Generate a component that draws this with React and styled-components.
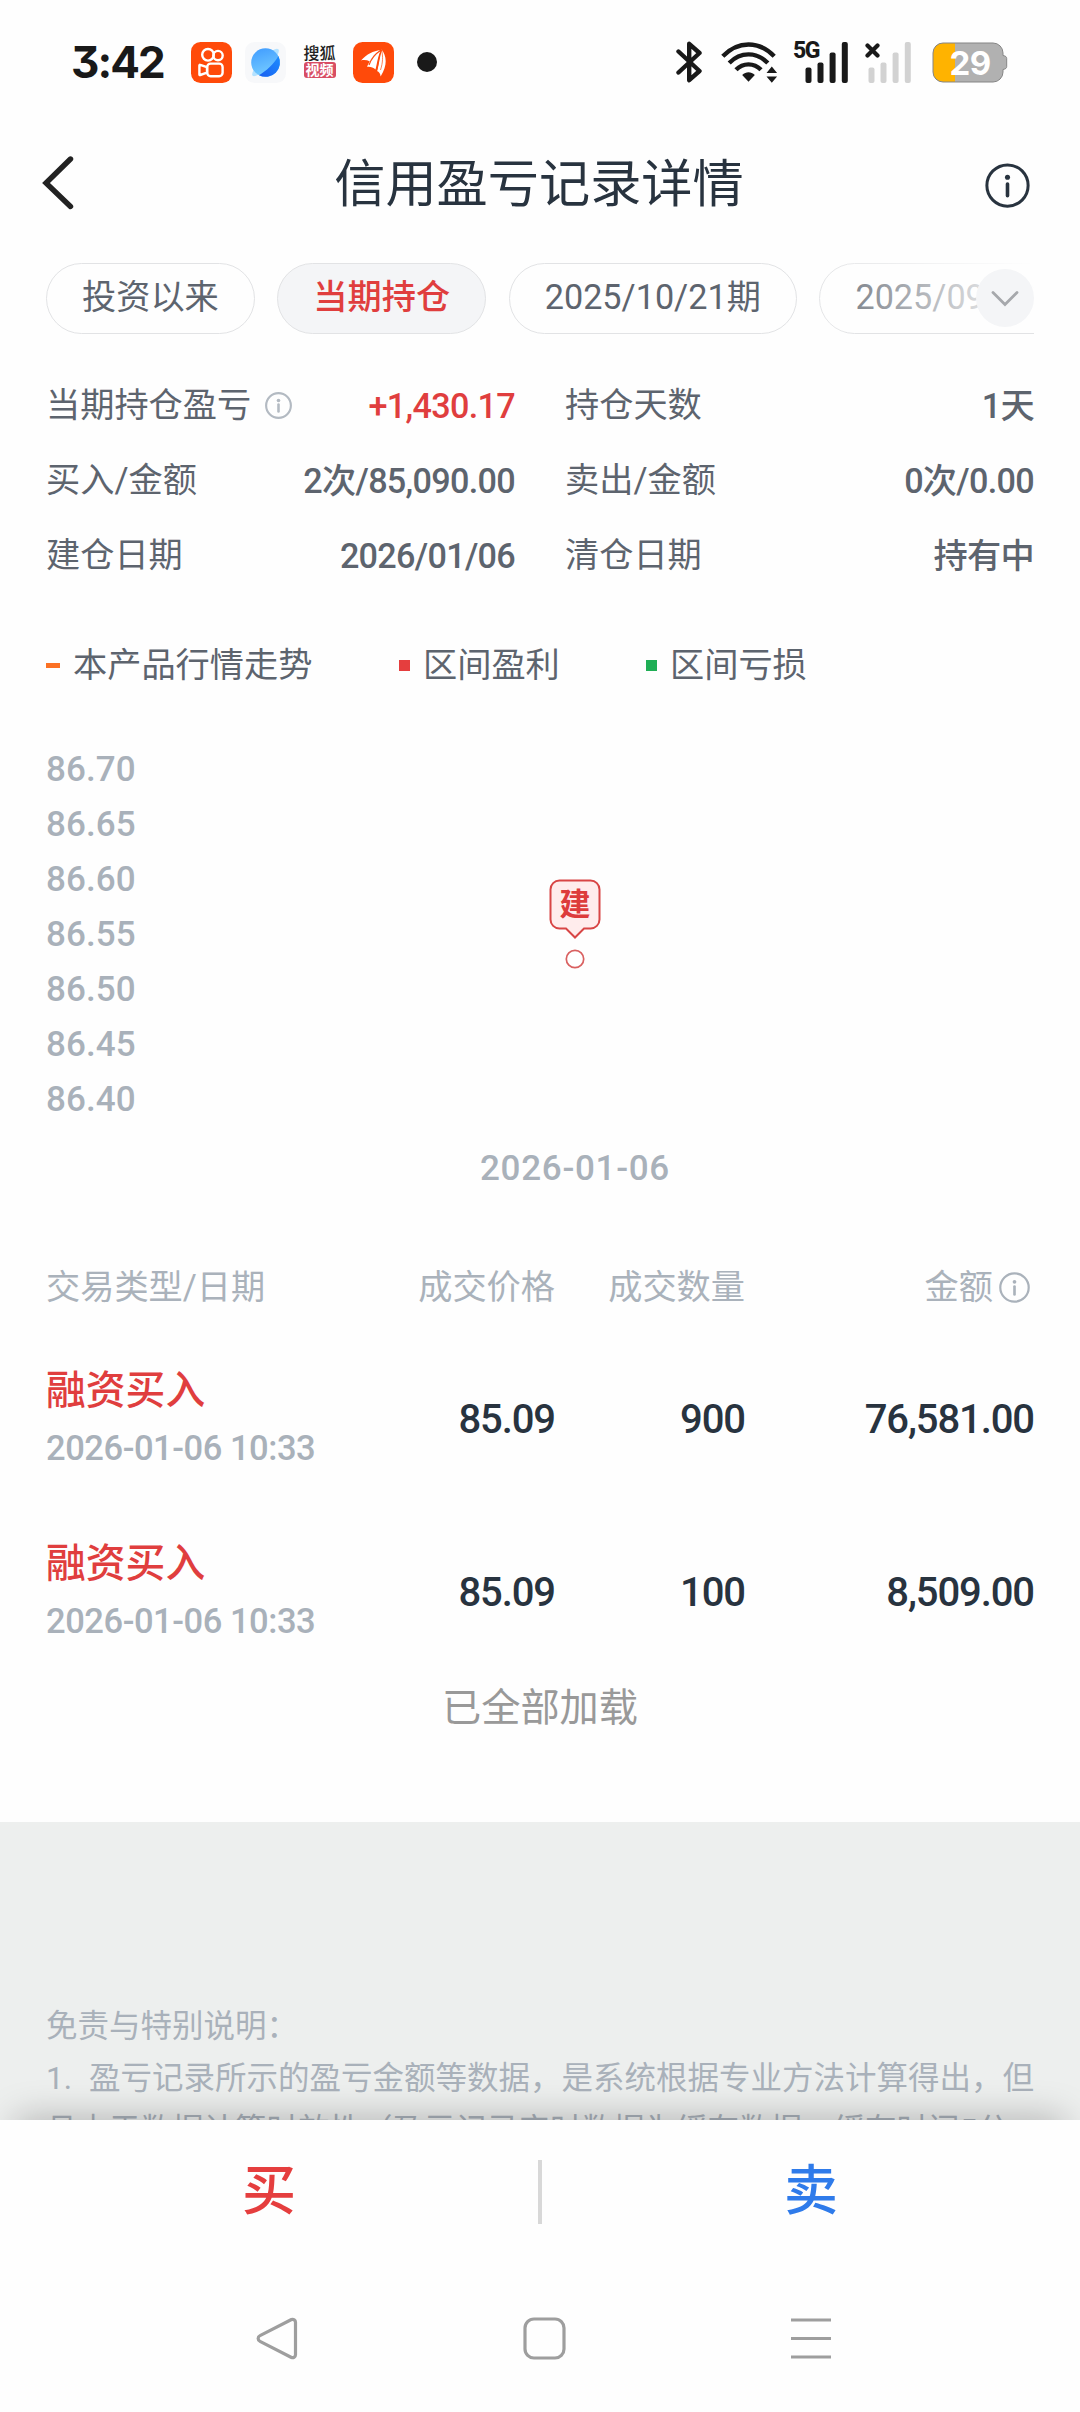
import React from 'react'
import styled, { createGlobalStyle } from 'styled-components'

const periods = [
    { label: '投资以来' },
    { label: '当期持仓', active: true },
    { label: '2025/10/21期' },
    { label: '2025/09/30期' },
]

const stats = [
    { label: '当期持仓盈亏', value: '+1,430.17', info: true, profit: true },
    { label: '持仓天数', value: '1天' },
    { label: '买入/金额', value: '2次/85,090.00' },
    { label: '卖出/金额', value: '0次/0.00' },
    { label: '建仓日期', value: '2026/01/06' },
    { label: '清仓日期', value: '持有中' },
]

const prices = ['86.70', '86.65', '86.60', '86.55', '86.50', '86.45', '86.40']

const trades = [
    { type: '融资买入', date: '2026-01-06 10:33', price: '85.09', count: '900', amount: '76,581.00' },
    { type: '融资买入', date: '2026-01-06 10:33', price: '85.09', count: '100', amount: '8,509.00' },
]

const InfoIcon = ({ size, color, stroke = 1.6 }) => (
    <svg width={size} height={size} viewBox="0 0 24 24" fill="none" stroke={color} strokeWidth={stroke}>
        <circle cx="12" cy="12" r="11" />
        <path d="M12 11.2v6.2" strokeWidth={stroke * 1.2} strokeLinecap="round" />
        <circle cx="12" cy="7.6" r={stroke * 0.85} fill={color} stroke="none" />
    </svg>
)

const KwaiIcon = () => (
    <svg width="41" height="41" viewBox="0 0 41 41" fill="none" stroke="#fff" strokeWidth="2.4" strokeLinejoin="round">
        <rect width="41" height="41" rx="9.5" fill="#ff4a0a" stroke="none" />
        <circle cx="17" cy="12.8" r="5.8" />
        <circle cx="27" cy="13.6" r="4.7" />
        <rect x="16.2" y="21.6" width="15.4" height="12.6" rx="3.4" />
        <path d="M16 25.2l-6.8-2.4c-.5-.2-.8.1-.8.6v9c0 .5.3.8.8.6L16 30.6z" />
    </svg>
)

const PlanetIcon = () => (
    <svg width="41" height="41" viewBox="0 0 41 41">
        <defs>
            <linearGradient id="planetTop" x1="0" y1="0" x2="0.3" y2="1">
                <stop offset="0" stopColor="#3f9bff" />
                <stop offset="1" stopColor="#74cbff" />
            </linearGradient>
            <linearGradient id="planetLow" x1="0" y1="1" x2="1" y2="0">
                <stop offset="0" stopColor="#1a5ff0" />
                <stop offset="1" stopColor="#1d8dff" />
            </linearGradient>
        </defs>
        <rect width="41" height="41" rx="9.5" fill="#f7f8fa" />
        <ellipse cx="20.5" cy="20.5" rx="18.5" ry="5" transform="rotate(-46 20.5 20.5)" fill="#b4e2ff" />
        <circle cx="20.5" cy="20.5" r="14.3" fill="url(#planetTop)" />
        <path d="M33.400 14A14.300 14.300 0 0 1 14 33.200C21 29 29 22 33.400 14z" fill="url(#planetLow)" />
    </svg>
)

const RibbonIcon = () => (
    <svg width="41" height="41" viewBox="0 0 41 41" fill="#fff">
        <rect width="41" height="41" rx="9.5" fill="#ff4a0a" />
        <path d="M8 18.400C14 12 20 9 27.500 8 22 11.500 19 15 17 19.500 14 18 11 17.800 8 18.400z" />
        <path d="M14 24.800C18 16 22 11.500 28 8.200 25 13.500 24.500 19 22.500 27.500 20 25 17 24.300 14 24.800z" />
        <path d="M24 29C26 22 26 15 28.600 7.500 33.500 14 35 23 27.600 34.500 27.500 31.500 26 30 24 29z" />
        <path d="M28.200 8C22 12 18 17 16 23M28.600 8C26 14 26 20 23.500 29" fill="none" stroke="#ff4a0a" strokeWidth="1.200" />
        <path d="M28.700 8C30 15 30 20 27.500 28" fill="none" stroke="#ff4a0a" strokeWidth="0.700" />
    </svg>
)

const BluetoothIcon = () => (
    <svg width="26" height="42" viewBox="0 0 26 42" fill="none" stroke="#191919" strokeWidth="4.4" strokeLinejoin="round" strokeLinecap="round">
        <path d="M2.500 10.500L23.500 30 13.200 39.200V2.800L23.500 12 2.500 31.500" />
    </svg>
)

const WifiIcon = () => (
    <svg width="57" height="41" viewBox="0 0 57 41" fill="none" stroke="#191919" strokeWidth="4.4">
        <path d="M1.800 14.200C17 -1.500 38 -1.500 53.200 14.200" />
        <path d="M8.200 21C19.500 9.500 35.500 9.500 46.800 21" />
        <path d="M15 27.800C22 20.500 33 20.500 40 27.800" />
        <path d="M21.200 33C25 29.300 30 29.300 33.800 33L27.500 39.800z" fill="#191919" stroke="none" />
        <path d="M45.500 31h10.600L50.800 24.500zM45.500 34.500h10.600L50.800 40.800z" fill="#191919" stroke="none" />
    </svg>
)

const SignalBars = ({ color }) => (
    <svg width="44" height="41" viewBox="0 0 44 41" fill={color}>
        <rect x="0.5" y="25.5" width="6" height="15.5" rx="2" />
        <rect x="12.5" y="20.5" width="6" height="20.5" rx="2" />
        <rect x="24.6" y="10.5" width="6" height="30.5" rx="2" />
        <rect x="36.8" y="0" width="6" height="41" rx="2" />
    </svg>
)

const BatteryShape = () => (
    <svg width="76" height="41" viewBox="0 0 76 41">
        <defs>
            <clipPath id="cell">
                <path d="M11 1h50a10 10 0 0 1 10 10v2.500c2.800.4 3.700 1.500 3.700 3v8c0 1.500-.9 2.600-3.700 3V30a10 10 0 0 1-10 10H11A10 10 0 0 1 1 30V11A10 10 0 0 1 11 1z" />
            </clipPath>
        </defs>
        <g clipPath="url(#cell)">
            <rect width="76" height="41" fill="#b1b1b1" />
            <rect width="23" height="41" fill="#ffb300" />
        </g>
        <path d="M11 1h50a10 10 0 0 1 10 10v2.500c2.800.4 3.700 1.500 3.700 3v8c0 1.500-.9 2.600-3.700 3V30a10 10 0 0 1-10 10H11A10 10 0 0 1 1 30V11A10 10 0 0 1 11 1z" fill="none" stroke="#858585" strokeWidth="1" />
    </svg>
)

const App = () => {
    return (
        <Screen>
            <GlobalStyle />

            <StatusBar>
                <Clock>3:42</Clock>
                <AppIcons>
                    <KwaiIcon />
                    <PlanetIcon />
                    <Sohu>
                        <SohuTop>搜狐</SohuTop>
                        <SohuTag>视频</SohuTag>
                    </Sohu>
                    <RibbonIcon />
                </AppIcons>
                <MoreDot />
                <SystemIcons>
                    <BluetoothIcon />
                    <WifiSlot><WifiIcon /></WifiSlot>
                    <Signal>
                        <NetType>5G</NetType>
                        <SignalBars color="#191919" />
                    </Signal>
                    <Signal $second>
                        <NoService width="15" height="15" viewBox="0 0 15 15">
                            <path d="M2.500 2.500l10 10M12.500 2.500l-10 10" stroke="#191919" strokeWidth="4.2" strokeLinecap="round" />
                        </NoService>
                        <SignalBars color="#d2d2d2" />
                    </Signal>
                    <Battery>
                        <BatteryShape />
                        <BatteryText>29</BatteryText>
                    </Battery>
                </SystemIcons>
            </StatusBar>

            <TitleBar>
                <BackIcon width="32" height="54" viewBox="0 0 32 54">
                    <path d="M28.500 3L4 27 28.500 50.500" />
                </BackIcon>
                <Title>信用盈亏记录详情</Title>
                <InfoIcon size={45} color="#28333f" />
            </TitleBar>

            <Periods>
                {periods.map((period) => (
                    <Chip key={period.label} $active={period.active}>{period.label}</Chip>
                ))}
                <PeriodsFade />
                <ExpandButton>
                    <svg width="28" height="17" viewBox="0 0 28 17" fill="none" stroke="#a6a8ac" strokeWidth="2.8" strokeLinecap="round">
                        <path d="M2 2.500L14 14.500 26 2.500" />
                    </svg>
                </ExpandButton>
            </Periods>

            <Stats>
                {stats.map((item) => (
                    <Stat key={item.label}>
                        <StatLabel>
                            {item.label}
                            {item.info && <InfoIcon size={27} color="#b3bac2" stroke={1.9} />}
                        </StatLabel>
                        <StatValue $profit={item.profit}>{item.value}</StatValue>
                    </Stat>
                ))}
            </Stats>

            <Legend>
                <LegendItem $width={353}><DashMark />本产品行情走势</LegendItem>
                <LegendItem $width={247}><SquareMark $color="#e53e3e" />区间盈利</LegendItem>
                <LegendItem><SquareMark $color="#1fae55" />区间亏损</LegendItem>
            </Legend>

            <Chart>
                <PriceAxis>
                    {prices.map((price) => (
                        <AxisText key={price}>{price}</AxisText>
                    ))}
                </PriceAxis>
                <Marker>
                    <svg width="52" height="92" viewBox="0 0 52 92" fill="#ffecec" stroke="#d84545" strokeWidth="2">
                        <path d="M10.500 1.500h31a9 9 0 0 1 9 9v30a9 9 0 0 1-9 9H35L26 58.500 17 49.500h-6.500a9 9 0 0 1-9-9v-30a9 9 0 0 1 9-9z" />
                        <circle cx="26" cy="80" r="8.7" fill="#fff" stroke="#d96060" strokeWidth="1.7" />
                    </svg>
                    <MarkerText>建</MarkerText>
                </Marker>
            </Chart>
            <DateAxis>
                <AxisText $wide>2026-01-06</AxisText>
            </DateAxis>

            <TableHead>
                <span>交易类型/日期</span>
                <HeadCell>成交价格</HeadCell>
                <HeadCell>成交数量</HeadCell>
                <HeadCell>
                    金额
                    <InfoIcon size={31} color="#aab2bb" stroke={1.7} />
                </HeadCell>
            </TableHead>
            {trades.map((trade) => (
                <TradeRow key={trade.count}>
                    <div>
                        <TradeType>{trade.type}</TradeType>
                        <TradeDate>{trade.date}</TradeDate>
                    </div>
                    <TradeValue>{trade.price}</TradeValue>
                    <TradeValue>{trade.count}</TradeValue>
                    <TradeValue>{trade.amount}</TradeValue>
                </TradeRow>
            ))}
            <LoadedAll>已全部加载</LoadedAll>

            <Disclaimer>
                <p>免责与特别说明：</p>
                <p>1.<Gap />盈亏记录所示的盈亏金额等数据，是系统根据专业方法计算得出，但</p>
                <p>且由于数据计算时效性（盈亏记录实时数据为缓存数据，缓存时间5分</p>
            </Disclaimer>

            <ActionBar>
                <Action $color="#e53e3e">买</Action>
                <Divider />
                <Action $color="#2f7bea">卖</Action>
            </ActionBar>

            <NavBar>
                <svg width="42" height="43" viewBox="0 0 42 43">
                    <path d="M35.500 2.500L4 18.600a3.200 3.200 0 0 0 0 5.800L35.500 40.500a3 3 0 0 0 4-2.800V5.300a3 3 0 0 0-4-2.800z" />
                </svg>
                <svg width="43" height="43" viewBox="0 0 43 43">
                    <rect x="2" y="2" width="39" height="39" rx="9" />
                </svg>
                <svg width="42" height="43" viewBox="0 0 42 43">
                    <path d="M1 3h40M1 21.500h40M1 40h40" />
                </svg>
            </NavBar>
        </Screen>
    )
}

export default App

const GlobalStyle = createGlobalStyle`
    * {
        box-sizing: border-box;
    }

    body {
        margin: 0;
        background: #fefefe;
    }

    p {
        margin: 0;
    }

    svg {
        display: block;
        flex: none;
    }
`

const Screen = styled.div`
    display: flex;
    flex-direction: column;
    width: 1080px;
    height: 2412px;
    overflow: hidden;
    background: #fefefe;
    color: #5d646e;
    font-family: Roboto, 'Noto Sans CJK SC', sans-serif;
    white-space: nowrap;
`

const StatusBar = styled.div`
    display: flex;
    align-items: center;
    height: 124px;
    padding-left: 71px;
    flex: none;
`

const Clock = styled.div`
    width: 120px;
    color: #191919;
    font-family: Inter, sans-serif;
    font-size: 44px;
    font-weight: 700;
    font-feature-settings: 'cv09';
    letter-spacing: -2px;
    line-height: 50px;
`

const AppIcons = styled.div`
    display: flex;
    align-items: center;
    gap: 13px;
`

const Sohu = styled.div`
    width: 41px;
    display: flex;
    flex-direction: column;
    align-items: center;
    font-size: 16px;
    line-height: 16px;
`

const SohuTop = styled.div`
    color: #222;
    font-weight: 500;
`

const SohuTag = styled.div`
    width: 32px;
    border-radius: 3px;
    background: #d84d63;
    color: #fff;
    font-size: 14px;
    font-weight: 700;
    text-align: center;
`

const MoreDot = styled.div`
    width: 20px;
    height: 20px;
    margin-left: 23px;
    border-radius: 50%;
    background: #191919;
`

const SystemIcons = styled.div`
    display: flex;
    align-items: center;
    margin-left: 239px;
`

const WifiSlot = styled.div`
    margin: 0 27px 0 19px;
`

const Signal = styled.div`
    position: relative;
    padding-left: ${(props) => (props.$second ? '19px' : '0')};
    margin-right: ${(props) => (props.$second ? '20px' : '0')};
`

const NetType = styled.div`
    position: absolute;
    left: -12px;
    top: -3px;
    color: #191919;
    font-size: 23px;
    font-weight: 800;
    letter-spacing: -1.5px;
    line-height: 24px;
`

const NoService = styled.svg`
    position: absolute;
    left: 16px;
    top: 1px;
`

const Battery = styled.div`
    position: relative;
`

const BatteryText = styled.div`
    position: absolute;
    inset: 0;
    color: #fff;
    font-family: Inter, sans-serif;
    font-size: 33px;
    font-weight: 700;
    line-height: 42px;
    letter-spacing: -0.5px;
    text-align: center;
`

const TitleBar = styled.div`
    display: flex;
    align-items: center;
    justify-content: space-between;
    height: 122px;
    padding: 0 50px 0 42px;
    flex: none;
`

const BackIcon = styled.svg`
    margin-bottom: 4px;
    fill: none;
    stroke: #222;
    stroke-width: 5.4px;
    stroke-linecap: round;
`

const Title = styled.h1`
    margin: 0 0 0 19px;
    color: #28333f;
    font-size: 51.2px;
    font-weight: 400;
    line-height: 60px;
`

const Periods = styled.div`
    position: relative;
    display: flex;
    gap: 22.6px;
    width: 988px;
    height: 71px;
    margin: 17px 46px 0;
    overflow: hidden;
    flex: none;
`

const Chip = styled.div`
    padding: 0 35px;
    border: 1px solid #e2e3e5;
    border-radius: 36px;
    background: ${(props) => (props.$active ? '#f4f5f7' : 'transparent')};
    color: ${(props) => (props.$active ? '#e03e3e' : '#5d646e')};
    font-size: 34.2px;
    font-weight: ${(props) => (props.$active ? 500 : 400)};
    line-height: 67px;
    flex: none;
`

const PeriodsFade = styled.div`
    position: absolute;
    top: 0;
    right: 0;
    width: 236px;
    height: 69px;
    background: linear-gradient(to right, rgba(254, 254, 254, 0), #fefefe);
`

const ExpandButton = styled.div`
    position: absolute;
    top: 6px;
    right: 0;
    display: flex;
    align-items: center;
    justify-content: center;
    width: 58px;
    height: 58px;
    border-radius: 50%;
    background: #f4f5f7;
`

const Stats = styled.div`
    display: grid;
    grid-template-columns: 469px 469px;
    grid-auto-rows: 75px;
    column-gap: 50px;
    margin: 34px 46px 0;
    flex: none;
`

const Stat = styled.div`
    display: flex;
    align-items: center;
    justify-content: space-between;
`

const StatLabel = styled.div`
    display: flex;
    align-items: center;
    gap: 14px;
    padding-bottom: 2px;
    font-size: 34.2px;
    line-height: 50px;

    svg {
        margin-top: 2px;
    }
`

const StatValue = styled.div`
    color: ${(props) => (props.$profit ? '#e03e3e' : '#5d646e')};
    font-size: 34.2px;
    font-weight: 500;
    letter-spacing: -0.7px;
    line-height: 50px;
`

const Legend = styled.div`
    display: flex;
    height: 50px;
    margin: 47px 46px 0;
    font-size: 34.2px;
    flex: none;
`

const LegendItem = styled.div`
    display: flex;
    align-items: center;
    gap: 13px;
    width: ${(props) => (props.$width ? `${props.$width}px` : 'auto')};
    line-height: 50px;
`

const DashMark = styled.span`
    width: 14px;
    height: 5px;
    background: #fb7124;
`

const SquareMark = styled.span`
    width: 11px;
    height: 11px;
    background: ${(props) => props.$color};
`

const Chart = styled.div`
    position: relative;
    height: 384px;
    margin: 53px 46px 0;
    flex: none;
`

const PriceAxis = styled.div`
    display: grid;
    grid-auto-rows: 54.86px;
    align-items: center;
`

const AxisText = styled.div`
    color: #a9b1ba;
    font-size: 35px;
    font-weight: 500;
    letter-spacing: ${(props) => (props.$wide ? '0.7px' : '0.1px')};
    line-height: 54px;
`

const Marker = styled.div`
    position: absolute;
    left: 503px;
    top: 136px;
`

const MarkerText = styled.div`
    position: absolute;
    inset: 0;
    color: #dd3c3c;
    font-size: 31px;
    font-weight: 700;
    line-height: 51px;
    text-align: center;
`

const DateAxis = styled.div`
    display: flex;
    justify-content: center;
    margin: 15px 0 0 70px;
    flex: none;
`

const columns = '300px 209px 190px 289px'

const TableHead = styled.div`
    display: grid;
    grid-template-columns: ${columns};
    height: 50px;
    margin: 66px 46px 0;
    color: #aab2bb;
    font-size: 34.2px;
    line-height: 50px;
    flex: none;
`

const HeadCell = styled.div`
    display: flex;
    align-items: center;
    justify-content: flex-end;
    gap: 6px;

    svg {
        margin-right: 4px;
    }
`

const TradeRow = styled.div`
    display: grid;
    grid-template-columns: ${columns};
    align-items: center;
    height: 173px;
    margin: 0 46px;
    flex: none;

    ${TableHead} + & {
        margin-top: 20px;
    }
`

const TradeType = styled.div`
    color: #e03e3e;
    font-size: 39.8px;
    font-weight: 500;
    line-height: 58px;
`

const TradeDate = styled.div`
    color: #a9b1ba;
    font-size: 34.5px;
    font-weight: 500;
    letter-spacing: -0.45px;
    line-height: 56px;
`

const TradeValue = styled.div`
    padding-top: 2px;
    color: #28333f;
    font-size: 40px;
    font-weight: 500;
    letter-spacing: -1.1px;
    text-align: right;
`

const LoadedAll = styled.div`
    color: #999;
    font-size: 39.2px;
    line-height: 60px;
    text-align: center;
    flex: none;
`

const Disclaimer = styled.div`
    height: 298px;
    margin-top: 84px;
    padding: 179px 46px 0;
    overflow: hidden;
    background: #edefee;
    color: #a9b1ba;
    font-size: 31.5px;
    line-height: 52.2px;
    flex: none;
`

const Gap = styled.span`
    display: inline-block;
    width: 17px;
`

const ActionBar = styled.div`
    position: relative;
    display: flex;
    align-items: center;
    height: 144px;
    background: #fefefe;
    flex: none;

    &::before {
        content: '';
        position: absolute;
        left: 16px;
        right: 16px;
        top: 0;
        height: 40px;
        box-shadow: 0 -2px 36px rgba(0, 0, 0, 0.26);
        clip-path: inset(-60px -16px 100% -16px);
    }
`

const Action = styled.div`
    flex: 1;
    color: ${(props) => props.$color};
    font-size: 54px;
    font-weight: 500;
    line-height: 146px;
    text-align: center;
`

const Divider = styled.div`
    width: 4px;
    height: 64px;
    background: #d8d8d8;
`

const NavBar = styled.div`
    display: flex;
    justify-content: space-between;
    padding: 53px 248px 0 256px;
    flex: none;

    svg {
        fill: none;
        stroke: #9e9e9e;
        stroke-width: 3.2px;
        stroke-linejoin: round;
    }
`
